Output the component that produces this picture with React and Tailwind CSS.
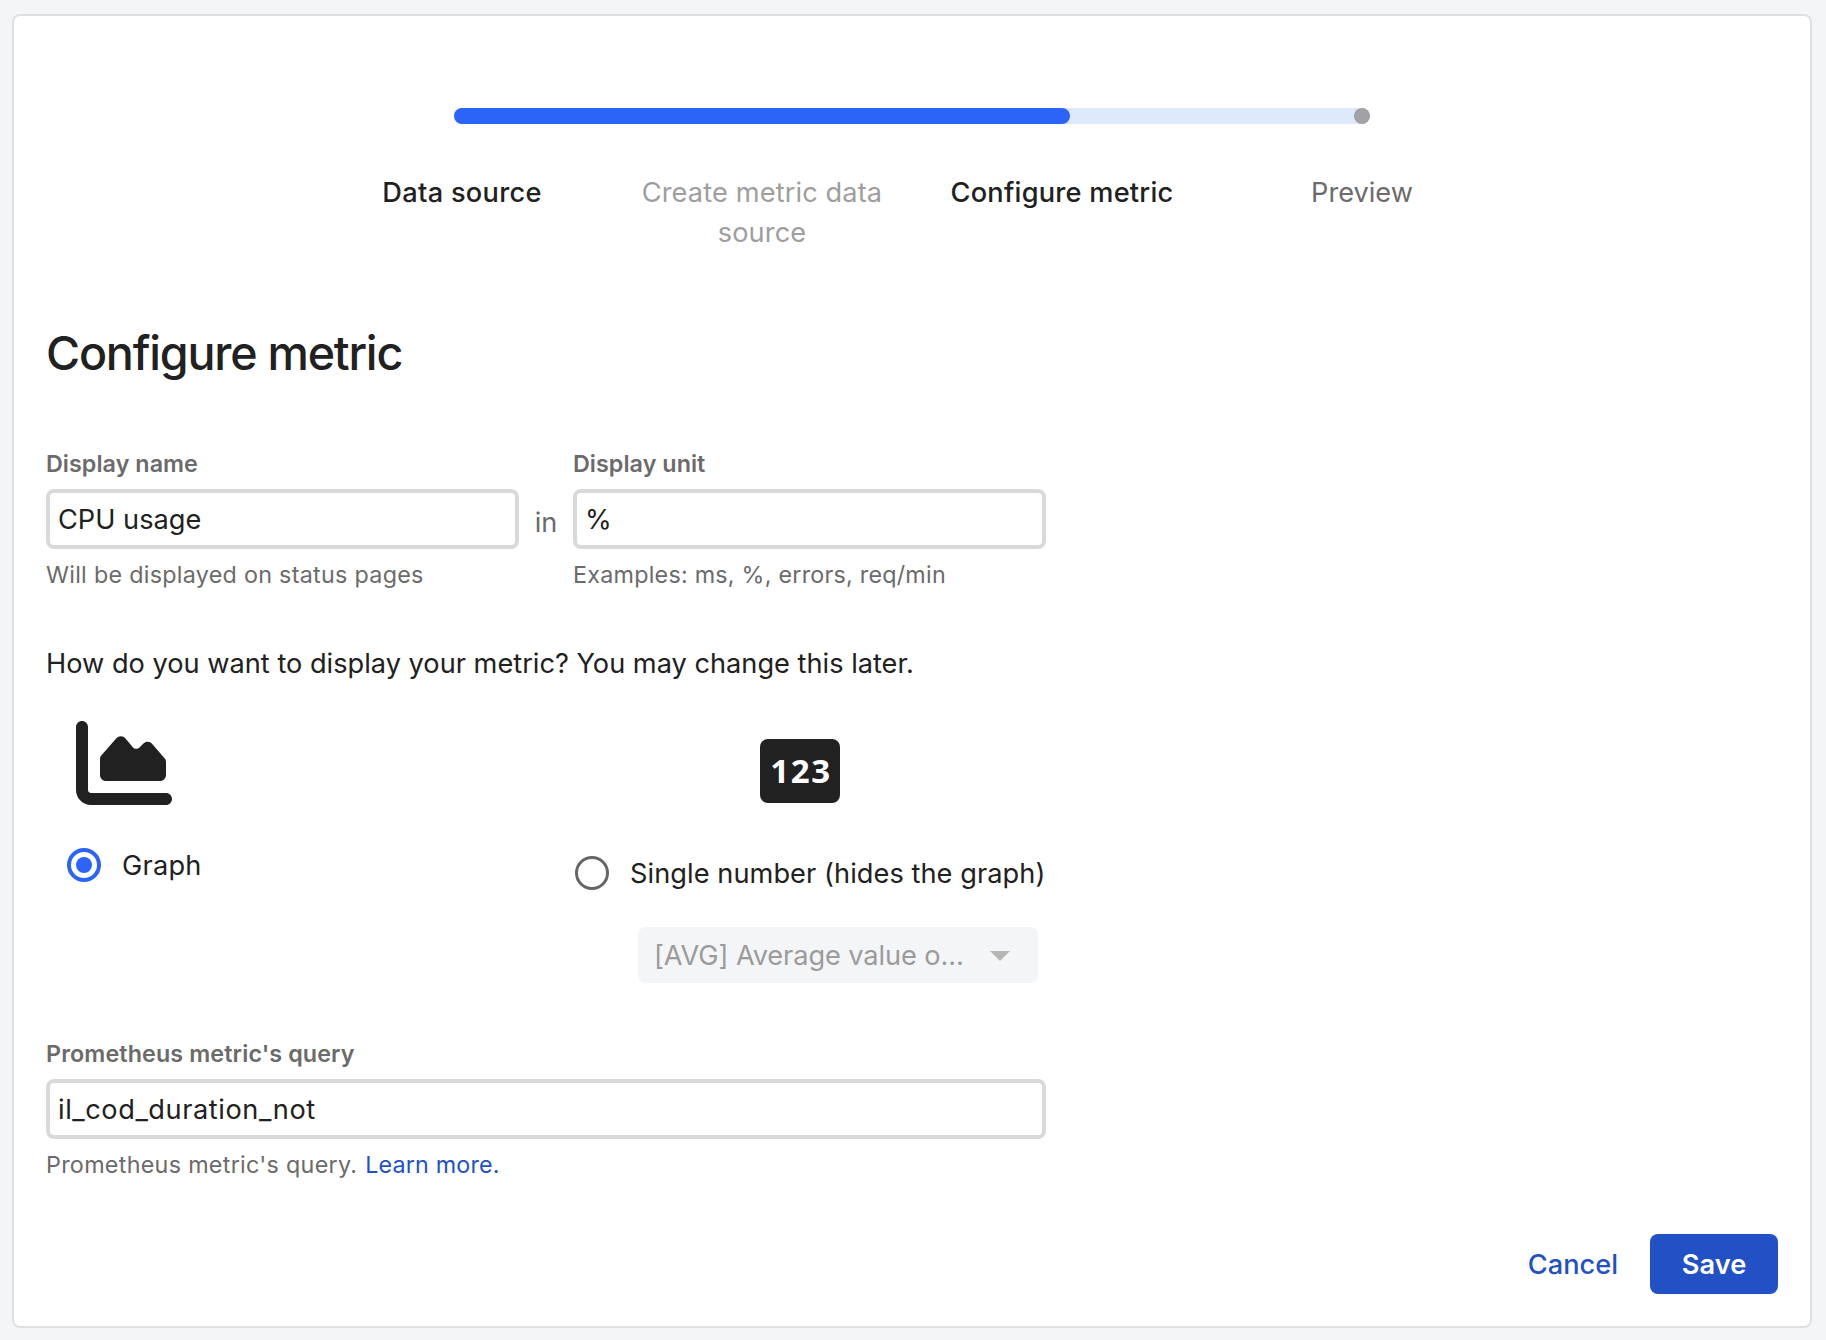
import { FaChartArea } from "react-icons/fa6";

const steps = [
  { label: "Data source", style: "font-medium text-[#212121] tracking-[0.28px]" },
  { label: "Create metric data source", style: "text-[#9e9e9e] tracking-[0.12px]" },
  { label: "Configure metric", style: "font-medium text-[#212121] tracking-[0.24px]" },
  { label: "Preview", style: "text-[#6b6b6b] tracking-[0px]" },
];

function Stepper() {
  return (
    <div className="mx-auto w-[1200px]">
      <div className="mx-[142px] flex h-4 justify-between rounded-full bg-[#dfe9fc]">
        <div className="h-4 w-[616px] rounded-full bg-[#2b64f6]" />
        <div className="size-4 rounded-full bg-[#a1a1a6]" />
      </div>
      <div className="mt-[49px] grid h-20 grid-cols-4 text-center text-[27.2px] leading-[40px]">
        {steps.map((s) => (
          <div key={s.label} className={`px-6 ${s.style}`}>
            {s.label}
          </div>
        ))}
      </div>
    </div>
  );
}

function Field({ label, labelStyle, value, valueStyle, width, children }) {
  return (
    <div className={`flex flex-col ${width}`}>
      <label className={`text-[23.3px] leading-8 font-semibold text-[#6b6b6b] ${labelStyle}`}>{label}</label>
      <input
        defaultValue={value}
        className={`mt-[9px] h-[60px] w-full rounded-lg border-4 border-[#d8d9db] bg-white px-2 text-[27.2px] text-[#212121] outline-none ${valueStyle}`}
      />
      <p className="mt-2.5 text-[23.3px] leading-8 text-[#6b6b6b]">{children}</p>
    </div>
  );
}

function Radio({ checked }) {
  return (
    <span
      className={`flex size-[34px] shrink-0 items-center justify-center rounded-full ${
        checked ? "border-4 border-[#2b64f6]" : "border-[3.5px] border-[#666666]"
      }`}
    >
      {checked && <span className="size-4 rounded-full bg-[#2b64f6]" />}
    </span>
  );
}

export default function App() {
  return (
    <div className="h-[1340px] w-[1826px] bg-[#f4f5f7] pt-3.5 pl-3 font-['Inter',sans-serif]">
      <div className="h-[1314px] w-[1800px] rounded-lg border-2 border-[#dfe0e1] bg-white px-8 pt-[92px]">
        <Stepper />

        <h1 className="mt-[72px] text-[46.6px] leading-[56px] font-medium tracking-[-1.22px] text-[#212121]">
          Configure metric
        </h1>

        <div className="mt-[67px] flex">
          <Field
            label="Display name"
            labelStyle="tracking-[0.05px]"
            value="CPU usage"
            valueStyle="tracking-[0px]"
            width="w-[473px]"
          >
            <span className="tracking-[0.29px]">Will be displayed on status pages</span>
          </Field>
          <span className="mt-[55px] w-[54px] text-center text-[27.2px] leading-[40px] text-[#6b6b6b]">
            in
          </span>
          <Field
            label="Display unit"
            labelStyle="tracking-[0.05px]"
            value="%"
            valueStyle=""
            width="w-[473px]"
          >
            <span className="tracking-[0.24px]">Examples: ms, %, errors, req/min</span>
          </Field>
        </div>

        <p className="mt-[53px] text-[27.2px] leading-[40px] tracking-[0px] text-[#212121]">
          How do you want to display your metric? You may change this later.
        </p>

        <div className="mt-[31px] flex h-[268px] w-[1000px] justify-between">
          <div className="ml-[21px] flex flex-col items-start">
            <FaChartArea className="ml-[9px] size-24 text-[#212121]" />
            <div className="mt-[34px] flex h-10 items-center gap-[21px]">
              <Radio checked />
              <span className="pt-0.5 text-[27.2px] leading-[40px] tracking-[0.22px] text-[#212121]">Graph</span>
            </div>
          </div>
          <div className="flex w-[471px] flex-col pt-6">
            <div className="ml-[185px] flex h-16 w-20 items-center justify-center rounded-lg bg-[#212121] pl-0.5 font-['Open_Sans',sans-serif] text-[33px] font-bold tracking-[1.6px] text-white">
              123
            </div>
            <div className="mt-[50px] flex h-10 items-center gap-[21px] whitespace-nowrap">
              <Radio />
              <span className="pt-0.5 text-[27.2px] leading-[40px] tracking-[0.06px] text-[#212121]">
                Single number (hides the graph)
              </span>
            </div>
            <div className="mt-[34px] ml-[63px] flex h-14 w-[400px] items-center justify-between rounded-lg bg-[#f4f5f7] pr-7 pl-4">
              <span className="pt-0.5 text-[27.2px] tracking-[-0.1px] text-[#9b9b9b]">[AVG] Average value o...</span>
              <svg viewBox="0 0 20 10" className="mt-0.5 h-2.5 w-5 fill-[#b5b5b6]">
                <path d="M0 0H20L10 10Z" />
              </svg>
            </div>
          </div>
        </div>

        <div className="mt-[55px]">
          <Field
            label="Prometheus metric's query"
            labelStyle="tracking-[0.12px]"
            value="il_cod_duration_not"
            valueStyle="tracking-[0.56px]"
            width="w-[1000px]"
          >
            <span className="tracking-[0.3px]">Prometheus metric's query. </span>
            <a className="ml-px tracking-[0.17px] text-[#2251c5]">Learn more.</a>
          </Field>
        </div>

        <div className="mt-[53px] flex items-center justify-end gap-8 text-[27.2px]">
          <button className="pt-[3px] font-medium text-[#2251c5]">Cancel</button>
          <button className="h-[60px] w-32 rounded-lg bg-[#2251c5] pt-[3px] font-semibold tracking-[0.07px] text-white">
            Save
          </button>
        </div>
      </div>
    </div>
  );
}
